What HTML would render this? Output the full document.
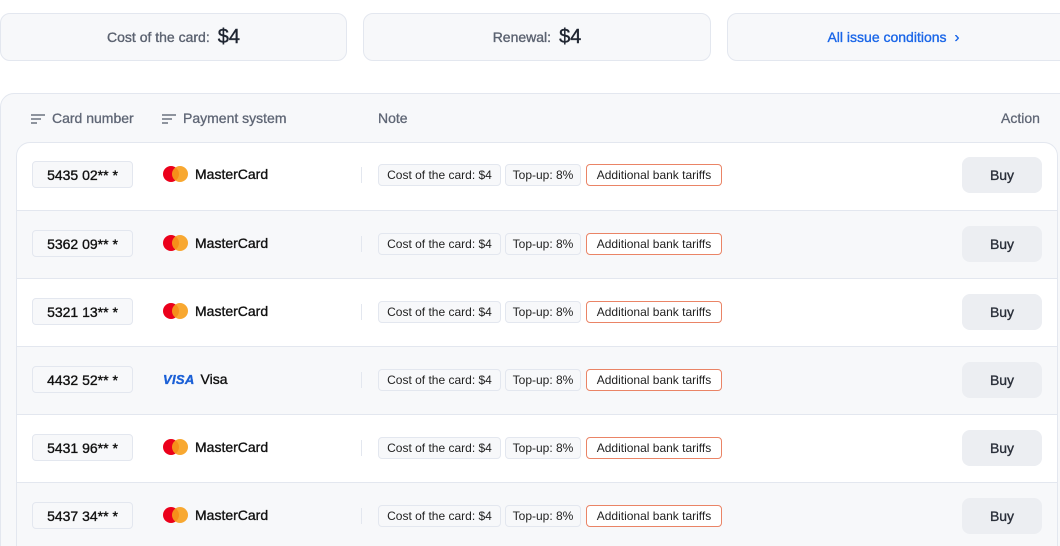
<!DOCTYPE html>
<html style="height:546px;overflow:hidden"><head><style>
*{box-sizing:border-box;margin:0;padding:0}
body{width:1060px;height:546px;overflow:hidden;background:#fff;font-family:"Liberation Sans",Arial,sans-serif;position:relative}
.m{-webkit-text-stroke:0.35px currentColor}
.box{position:absolute;top:13px;height:48px;border:1px solid #e3e7ef;border-radius:10px;background:#f7f8fa;display:flex;align-items:center;justify-content:center;font-size:14px;color:#5b6270}
.box b{font-weight:500;font-size:20px;color:#1e2430;margin-left:8px;-webkit-text-stroke:0.4px currentColor}
.panel{position:absolute;left:0;top:93px;width:1075px;height:470px;background:#f7f8fa;border:1px solid #e3e7ef;border-radius:14px}
.hd{position:absolute;top:110px;font-size:14px;color:#5f6675;-webkit-text-stroke:0.3px currentColor}
.hd svg{vertical-align:-1px;margin-right:7px}
.card{position:absolute;left:16px;top:142px;width:1042px;height:420px;background:#fff;border:1px solid #e3e7ef;border-radius:14px;overflow:hidden}
.row{position:absolute;left:0;width:100%;height:68px;border-top:1px solid #e3e7ef}
.row.g{background:#f7f8fa}
.num{position:absolute;left:15px;top:19px;width:101px;height:27px;border:1px solid #e3e7ef;border-radius:4px;background:#f7f8fa;font-size:14px;color:#111;display:flex;align-items:center;justify-content:center;-webkit-text-stroke:0.35px currentColor}
.ps{position:absolute;left:146px;top:24px;font-size:14px;color:#111;display:flex;align-items:center;-webkit-text-stroke:0.35px currentColor}
.mc{width:26px;height:16px;position:relative;margin-right:6px}
.mc i{position:absolute;top:0;width:16px;height:16px;border-radius:50%}
.visa{font-style:italic;font-weight:bold;color:#1a5fd6;font-size:13px;margin-right:6px;letter-spacing:.3px}
.sep{position:absolute;left:344px;top:25px;width:1px;height:16px;background:#e3e7ef}
.chip{position:absolute;top:22px;height:22px;border:1px solid #e3e7ef;border-radius:4px;background:#f7f8fa;font-size:12px;color:#222;display:flex;align-items:center;justify-content:center}
.chip.o{border-color:#ea8466;background:#fff}
.buy{position:absolute;left:945px;top:15px;width:80px;height:36px;border-radius:8px;background:#eceef2;font-size:14px;color:#2a2f3a;display:flex;align-items:center;justify-content:center;-webkit-text-stroke:0.35px currentColor}
</style></head><body>
<div class="box m" style="left:0;width:347px">Cost of the card:<b>$4</b></div>
<div class="box m" style="left:363px;width:348px">Renewal:<b>$4</b></div>
<div class="box m" style="left:727px;width:345px;color:#1a66e8;padding-right:12px">All issue conditions <span style="margin-left:8px;font-size:15px">&#8250;</span></div>
<div class="panel"></div>
<div class="hd" style="left:31px"><svg width="14" height="10"><path d="M0 1h14M0 5h10M0 9h6" stroke="#6b7280" stroke-width="1.5"/></svg>Card number</div>
<div class="hd" style="left:162px"><svg width="14" height="10"><path d="M0 1h14M0 5h10M0 9h6" stroke="#6b7280" stroke-width="1.5"/></svg>Payment system</div>
<div class="hd" style="left:378px">Note</div>
<div class="hd" style="left:1001px">Action</div>
<div class="card">
<div class="row" style="top:-1px;border-top:0"><div class="num">5435 02** *</div><div class="ps"><span class="mc"><i style="left:0;background:#eb001b"></i><i style="left:9px;background:#f79e1b;opacity:.9"></i></span>MasterCard</div><div class="sep"></div><div class="chip" style="left:361px;width:123px">Cost of the card: $4</div><div class="chip" style="left:488px;width:76px">Top-up: 8%</div><div class="chip o" style="left:569px;width:136px">Additional bank tariffs</div><div class="buy">Buy</div></div>
<div class="row g" style="top:67px"><div class="num">5362 09** *</div><div class="ps"><span class="mc"><i style="left:0;background:#eb001b"></i><i style="left:9px;background:#f79e1b;opacity:.9"></i></span>MasterCard</div><div class="sep"></div><div class="chip" style="left:361px;width:123px">Cost of the card: $4</div><div class="chip" style="left:488px;width:76px">Top-up: 8%</div><div class="chip o" style="left:569px;width:136px">Additional bank tariffs</div><div class="buy">Buy</div></div>
<div class="row" style="top:135px"><div class="num">5321 13** *</div><div class="ps"><span class="mc"><i style="left:0;background:#eb001b"></i><i style="left:9px;background:#f79e1b;opacity:.9"></i></span>MasterCard</div><div class="sep"></div><div class="chip" style="left:361px;width:123px">Cost of the card: $4</div><div class="chip" style="left:488px;width:76px">Top-up: 8%</div><div class="chip o" style="left:569px;width:136px">Additional bank tariffs</div><div class="buy">Buy</div></div>
<div class="row g" style="top:203px"><div class="num">4432 52** *</div><div class="ps"><span class="visa">VISA</span>Visa</div><div class="sep"></div><div class="chip" style="left:361px;width:123px">Cost of the card: $4</div><div class="chip" style="left:488px;width:76px">Top-up: 8%</div><div class="chip o" style="left:569px;width:136px">Additional bank tariffs</div><div class="buy">Buy</div></div>
<div class="row" style="top:271px"><div class="num">5431 96** *</div><div class="ps"><span class="mc"><i style="left:0;background:#eb001b"></i><i style="left:9px;background:#f79e1b;opacity:.9"></i></span>MasterCard</div><div class="sep"></div><div class="chip" style="left:361px;width:123px">Cost of the card: $4</div><div class="chip" style="left:488px;width:76px">Top-up: 8%</div><div class="chip o" style="left:569px;width:136px">Additional bank tariffs</div><div class="buy">Buy</div></div>
<div class="row g" style="top:339px;height:90px"><div class="num">5437 34** *</div><div class="ps"><span class="mc"><i style="left:0;background:#eb001b"></i><i style="left:9px;background:#f79e1b;opacity:.9"></i></span>MasterCard</div><div class="sep"></div><div class="chip" style="left:361px;width:123px">Cost of the card: $4</div><div class="chip" style="left:488px;width:76px">Top-up: 8%</div><div class="chip o" style="left:569px;width:136px">Additional bank tariffs</div><div class="buy">Buy</div></div>
</div>
</body></html>
